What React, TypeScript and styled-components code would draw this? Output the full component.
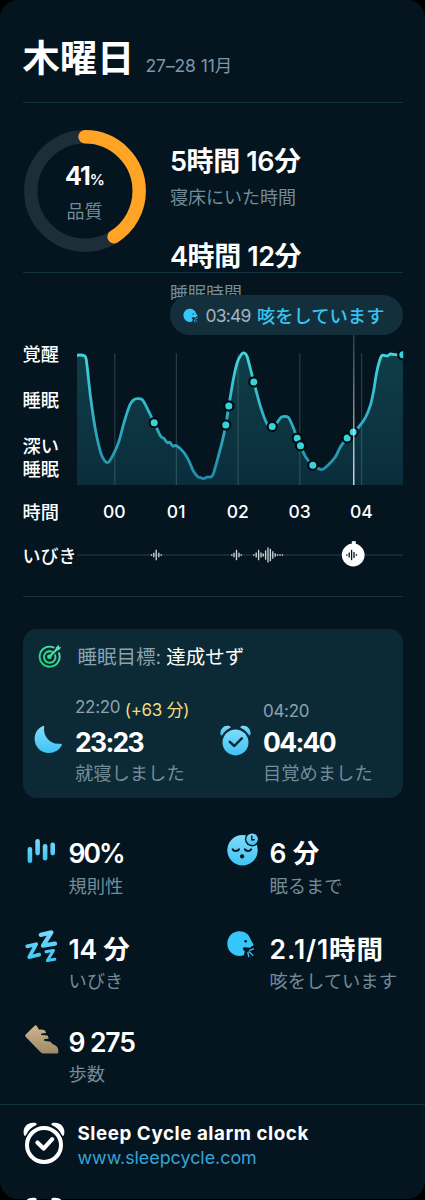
import styled, { createGlobalStyle } from 'styled-components';

const GlobalStyle = createGlobalStyle`
  * {
    box-sizing: border-box;
  }
  body {
    margin: 0;
    background: #000000;
    font-family: Inter, 'Noto Sans CJK JP', sans-serif;
    color: #ffffff;
  }
`;

const Page = styled.main`
  width: 425px;
  height: 1200px;
  overflow: hidden;
`;

const Card = styled.article`
  height: 1199px;
  border-radius: 18px;
  background: #04151f;
`;

const Body = styled.div`
  padding: 0 22.5px;
`;

const Divider = styled.hr`
  height: 1px;
  margin: 0;
  border: none;
  background: #123242;
`;

const Header = styled.header`
  display: flex;
  align-items: flex-start;
  height: 101.5px;
  padding-top: 37px;
`;

const Day = styled.h1`
  margin: 0;
  width: 123px;
  font-size: 37.3px;
  line-height: 44px;
  font-weight: 700;
`;

const DateText = styled.span`
  margin-top: 19px;
  font-size: 17.5px;
  line-height: 20px;
  letter-spacing: -0.1px;
  color: #7e96a9;
`;

const Summary = styled.section`
  display: flex;
  align-items: flex-start;
  height: 169px;
`;

const Quality = styled.div`
  display: grid;
  place-items: center;
  width: 124px;
  height: 124px;
  margin-top: 26.5px;

  > * {
    grid-area: 1 / 1;
  }
`;

const QualityText = styled.div`
  display: flex;
  flex-direction: column;
  align-items: center;
  gap: 6px;
  padding-top: 3px;
`;

const Percent = styled.div`
  font-size: 25px;
  line-height: 28px;
  font-weight: 700;
  letter-spacing: -1px;

  small {
    font-size: 15px;
    font-weight: 600;
  }
`;

const Label = styled.div<{ size?: number }>`
  font-size: ${(props) => props.size ?? 18}px;
  line-height: 24px;
  color: #728c9a;
  white-space: nowrap;
`;

const Value = styled.div<{ spacing?: number }>`
  font-size: 26.5px;
  line-height: 32px;
  font-weight: 600;
  letter-spacing: ${(props) => props.spacing ?? 0}px;
  white-space: nowrap;
`;

const Durations = styled.div`
  display: flex;
  flex-direction: column;
  gap: 31px;
  margin: 43px 0 0 23.5px;
`;

const Duration = styled.div`
  ${Value} {
    margin-bottom: 8.5px;
    font-size: 27px;
  }
`;

const Bubble = styled.div`
  position: relative;
  display: flex;
  align-items: center;
  width: 233px;
  height: 40.5px;
  margin: 22px 0 0 auto;
  padding: 1px 0 0 13px;
  border-radius: 21px;
  background: #132f3c;
  white-space: nowrap;

  svg {
    margin-right: 8px;
  }
`;

const BubbleTime = styled.span`
  width: 51.5px;
  font-size: 17.5px;
  letter-spacing: -0.8px;
  color: #a3b5c1;
`;

const BubbleText = styled.span`
  font-size: 18.3px;
  font-weight: 500;
  color: #36c6f4;
`;

const ChartRow = styled.div`
  display: grid;
  grid-template-columns: 54px 1fr;

  svg {
    display: block;
    overflow: visible;
  }
`;

const Stages = styled.div`
  display: flex;
  flex-direction: column;
  gap: 23px;
  padding-top: 7.5px;
  font-size: 18.2px;
  line-height: 23px;
  font-weight: 500;
`;

const Hours = styled.div`
  display: flex;
  margin-top: 14.5px;
  font-size: 17.5px;
  line-height: 24px;
  font-weight: 500;
`;

const HoursLabel = styled.span`
  width: 61px;
  font-size: 18.2px;
`;

const Hour = styled.span`
  width: 61.75px;
  text-align: center;
`;

const SnoreRow = styled(ChartRow)`
  height: 26px;
  margin: 18.5px 0 28px;
  align-items: center;
  font-size: 18px;
  line-height: 24px;
  font-weight: 500;
  white-space: nowrap;

  span {
    padding-top: 2.5px;
  }
`;

const Goal = styled.section`
  height: 169px;
  margin-top: 31.5px;
  padding: 15px 12px 0 11.5px;
  border-radius: 14px;
  background: #0c2936;
`;

const GoalTitle = styled.div`
  display: flex;
  align-items: center;
  height: 24px;
  font-size: 19.5px;
  color: #8ba2af;
  white-space: nowrap;

  svg {
    margin: 0 15.5px 0 4px;
  }

  b {
    margin-left: 5px;
    font-weight: 400;
    color: #ffffff;
  }
`;

const GoalTimes = styled.div`
  display: grid;
  grid-template-columns: 186px 1fr;
  margin-top: 29px;
`;

const GoalTime = styled.div<{ iconWidth: number }>`
  display: grid;
  grid-template-columns: ${(props) => props.iconWidth}px 1fr;

  > svg {
    margin-top: 28px;
  }
`;

const Planned = styled.div<{ top?: number }>`
  display: flex;
  height: 29px;
  padding-top: ${(props) => props.top ?? 0}px;
  font-size: 17px;
  line-height: 20px;
  letter-spacing: -0.3px;
  color: #8ba2af;
  white-space: nowrap;
`;

const Late = styled.span`
  margin: 3px 0 0 4.5px;
  font-size: 17px;
  color: #f1dc7d;
`;

const ClockTime = styled(Value)`
  font-weight: 700;
  line-height: 32px;
  margin-bottom: 3.5px;
`;

const Stats = styled.section`
  display: grid;
  grid-template-columns: 201px 1fr;
  grid-template-rows: 95.5px 93px 1fr;
  height: 306px;
  padding-top: 41.5px;
`;

const Stat = styled.div<{ iconTop: number }>`
  display: grid;
  grid-template-columns: 46px 1fr;

  > svg {
    margin-top: ${(props) => props.iconTop}px;
  }

  ${Value} {
    line-height: 29px;
    margin-bottom: 5.5px;
  }
`;

const Footer = styled.footer`
  display: flex;
  align-items: flex-start;
  height: 75px;
  padding: 17px 22.5px 0;

  svg {
    margin-right: 13px;
  }
`;

const AppName = styled.div`
  margin-top: -1px;
  font-size: 18.8px;
  line-height: 25px;
  letter-spacing: 0.55px;
  font-weight: 700;
  white-space: nowrap;
`;

const Link = styled.a`
  display: block;
  font-size: 17.85px;
  line-height: 24px;
  color: #35a4d8;
`;

// Chart coordinates: x from the left edge of the plot, y from the bubble's lower edge.
const curve: [number, number][] = [
  [0, 20.3], [3, 20], [6.2, 20.5], [9.2, 24.3], [13.5, 61.7], [18.5, 95], [24.5, 120],
  [30.2, 127.7], [35.2, 121.7], [41.8, 106.7], [46.8, 88.3], [52.8, 70], [56.8, 64.8],
  [60.2, 63.6], [65.2, 64.6], [70.2, 73.3], [77.2, 87.7], [83.5, 101], [86.8, 103.3],
  [90.2, 107.7], [92.8, 107.3], [95.8, 111], [99.5, 110.7], [106.8, 117.3],
  [111.8, 125.7], [116.2, 135.7], [120.8, 141.7], [123.5, 142.5], [126.8, 143.7],
  [130.2, 142], [133.5, 142], [136.2, 139.3], [140.8, 123.3], [145.2, 106.7],
  [148.8, 90], [151.8, 71], [156.2, 45], [160.2, 27.7], [164.5, 19.3], [167.2, 18],
  [170.2, 21.7], [176.8, 47], [183.5, 71.7], [190.2, 89.3], [195.2, 91.7],
  [200.2, 87.5], [204.5, 81.9], [211.2, 82.2], [216.2, 92.3], [220.2, 103.3],
  [223.5, 110.7], [228.5, 121.7], [235.8, 130.3], [240.8, 133.4], [245.2, 134.5],
  [250.2, 131], [258.5, 121.7], [263.5, 111.7], [270.2, 103], [276.2, 97],
  [281.8, 92], [288.5, 82.3], [293.5, 70], [296.8, 55], [299.5, 38.3], [302.8, 25],
  [305.2, 20.2], [310.2, 21], [313.5, 19], [318.5, 19.7], [326, 19.7],
];

const events: [number, number][] = [
  [77.2, 87.7], [148.8, 90], [151.8, 71], [176.8, 47], [195.2, 91.5], [220.2, 103.3],
  [223.5, 110.7], [235.8, 130.3], [270.2, 103], [276.2, 97], [325.8, 19.8],
];

const gridLines = [37.8, 99.4, 161.1, 222.8, 284.6];

// [x, half height] of each bar on the snore track
const snores: [number, number][] = [
  [74.5, 0.8], [76.8, 2.2], [79.2, 5.2], [81.8, 2.2], [84.2, 0.8],
  [154.8, 0.8], [157, 2.2], [159.5, 5.2], [162, 2.2], [164.2, 0.8],
  [176.8, 0.8], [179.2, 2.4], [181.6, 5.2], [184, 2.4], [186.2, 1.5],
  [188.6, 4.6], [191, 7.4], [193.4, 6.2], [195.8, 3.8], [198.2, 1.8], [200.6, 0.7],
  [203, 0.7], [205.4, 0.7],
];

const selectedSnore: [number, number][] = [
  [269.9, 0.8], [272.2, 2.4], [274.6, 5.2], [277, 3], [279.4, 0.8],
];

function smooth(points: [number, number][]) {
  let d = `M${points[0][0]} ${points[0][1]}`;
  for (let i = 0; i < points.length - 1; i++) {
    const a = points[Math.max(i - 1, 0)];
    const b = points[i];
    const c = points[i + 1];
    const e = points[Math.min(i + 2, points.length - 1)];
    d += ` C${b[0] + (c[0] - a[0]) / 8} ${b[1] + (c[1] - a[1]) / 8} ${c[0] - (e[0] - b[0]) / 8} ${c[1] - (e[1] - b[1]) / 8} ${c[0]} ${c[1]}`;
  }
  return d;
}

function SleepChart() {
  const line = smooth(curve);

  return (
    <svg width="326" height="150" viewBox="0 0 326 150">
      <defs>
        <clipPath id="plot">
          <rect x="0" y="0" width="326.2" height="150" />
        </clipPath>
        <linearGradient id="area" x1="0" y1="18" x2="0" y2="150" gradientUnits="userSpaceOnUse">
          <stop offset="0" stopColor="#0f3e47" />
          <stop offset="1" stopColor="#0a2d3c" />
        </linearGradient>
        <linearGradient id="line" x1="0" y1="18" x2="0" y2="150" gradientUnits="userSpaceOnUse">
          <stop offset="0" stopColor="#40d6e0" />
          <stop offset="1" stopColor="#2188a6" />
        </linearGradient>
        <linearGradient id="pin" x1="0" y1="0" x2="0" y2="150" gradientUnits="userSpaceOnUse">
          <stop offset="0" stopColor="#ffffff" stopOpacity="0.2" />
          <stop offset="0.7" stopColor="#ffffff" stopOpacity="0.8" />
          <stop offset="1" stopColor="#ffffff" />
        </linearGradient>
      </defs>
      <path d={`${line} V150 H0 Z`} fill="url(#area)" />
      {gridLines.map((x) => (
        <path key={x} d={`M${x} 18.5V150`} stroke="#7d98a3" strokeOpacity="0.3" strokeWidth="1.2" />
      ))}
      <g clipPath="url(#plot)">
        <path d={line} fill="none" stroke="url(#line)" strokeWidth="2.8" strokeLinejoin="round" />
        {events.map(([x, y]) => (
          <circle key={x} cx={x} cy={y} r="4.6" fill="#35d3de" stroke="#020b10" strokeWidth="2.2" />
        ))}
      </g>
      <path d="M276.8 0V150" stroke="url(#pin)" strokeWidth="1.2" />
    </svg>
  );
}

function SnoreTrack() {
  return (
    <svg width="326" height="26" viewBox="0 0 326 26">
      <path d="M0 13H326" stroke="#1a323c" strokeWidth="1.3" />
      {snores.map(([x, h]) => (
        <path key={x} d={`M${x} ${13 - h}V${13 + h}`} stroke="#d3dade" strokeWidth="1.3" />
      ))}
      <path d="M274.8 -0.8H278.8V3H274.8Z" fill="#ffffff" />
      <circle cx="276.2" cy="13" r="11.4" fill="#ffffff" />
      {selectedSnore.map(([x, h]) => (
        <path key={x} d={`M${x} ${13 - h}V${13 + h}`} stroke="#04151f" strokeWidth="1.3" />
      ))}
    </svg>
  );
}

function QualityRing() {
  return (
    <svg width="124" height="124" viewBox="0 0 124 124">
      <circle cx="62" cy="62" r="54.2" fill="none" stroke="#1d2d3a" strokeWidth="13.4" />
      <circle
        cx="62"
        cy="62"
        r="54.2"
        fill="none"
        stroke="#ffa425"
        strokeWidth="13.4"
        strokeLinecap="round"
        pathLength="100"
        strokeDasharray="41 100"
        transform="rotate(-90 62 62)"
      />
    </svg>
  );
}

function BlueGradient({ id }: { id: string }) {
  return (
    <linearGradient id={id} x1="0" y1="0" x2="0" y2="1">
      <stop offset="0" stopColor="#7fdcfb" />
      <stop offset="1" stopColor="#3fc3f5" />
    </linearGradient>
  );
}

function CoughIcon({ size, bg, inset = 0 }: { size: number; bg: string; inset?: number }) {
  return (
    <svg width={size + inset} height={size} viewBox={`${-inset} 0 ${28 + inset} 28`}>
      <path
        d="M13 1.2C18.4 1.2 22.8 4.4 24 9.2L26.8 14.2C27.3 15.2 26.8 16 25.8 16H25.2C24.8 17 23.8 17.8 22.6 17.7L18.4 17.2C17 17 16 17.8 16.4 18.9L18.2 21.6L17.4 25.2C16 25.8 14.6 26 13 26C6 26 .8 20.6 .8 13.6C.8 6.6 6 1.2 13 1.2Z"
        fill="#36c6fa"
      />
      <circle cx="19.2" cy="11.2" r="1.3" fill={bg} />
      <path d="M23.2 20.3L27 18.9M22.6 21.8L26.4 25.4M21.4 22.6L22.2 26.6" stroke="#36c6fa" strokeWidth="1.3" strokeLinecap="round" />
    </svg>
  );
}

function TargetIcon() {
  return (
    <svg width="24" height="24" viewBox="0 0 24 24" fill="none" strokeLinecap="round" strokeLinejoin="round">
      <defs>
        <linearGradient id="target" x1="24" y1="0" x2="0" y2="24" gradientUnits="userSpaceOnUse">
          <stop offset="0" stopColor="#62ebbd" />
          <stop offset="1" stopColor="#16cf72" />
        </linearGradient>
      </defs>
      <g stroke="url(#target)" strokeWidth="1.9">
        <path d="M15.6 3.5A10 10 0 1 0 21 9.2" />
        <path d="M13.8 7.6A5.8 5.8 0 1 0 17.2 11.2" />
        <path d="M11.2 13L19.4 4.8" strokeWidth="2.2" />
      </g>
      <circle cx="11.4" cy="12.8" r="2.3" fill="url(#target)" />
      <path d="M17.6 6.5L17.8 3.6L20.6 .9L21.2 3L23.3 3.6L20.6 6.3Z" fill="url(#target)" />
    </svg>
  );
}

function MoonIcon() {
  return (
    <svg width="29" height="29" viewBox="0 0 29 29">
      <defs>
        <BlueGradient id="moon" />
      </defs>
      <path
        d="M8.8 1.1C9.9 .5 10.6 1.2 10.2 2.3C8.7 11 16.3 20.2 26.2 18.7C27.6 18.5 28.3 19.2 27.6 20.5C25 25.2 20.4 28 15 28C7 28 .6 21.8 .6 14C.6 8.2 3.8 3.3 8.8 1.1Z"
        fill="url(#moon)"
      />
    </svg>
  );
}

function AlarmIcon() {
  return (
    <svg width="31" height="31" viewBox="0 0 31 31">
      <defs>
        <BlueGradient id="alarm" />
      </defs>
      <path d="M.6 9.7C-.6 4.4 4.2-.6 9.8 1.2C10.9 1.6 10.9 2.6 10 3.1C6.7 4.6 4.4 6.6 2.6 9.6C2 10.7 .9 10.8 .6 9.7Z" fill="url(#alarm)" />
      <path d="M30.4 9.7C31.6 4.4 26.8-.6 21.2 1.2C20.1 1.6 20.1 2.6 21 3.1C24.3 4.6 26.6 6.6 28.4 9.6C29 10.7 30.1 10.8 30.4 9.7Z" fill="url(#alarm)" />
      <circle cx="15.5" cy="17.4" r="13" fill="url(#alarm)" />
      <path d="M9.8 16.9L14.3 21L21.8 13.3" fill="none" stroke="#0c2936" strokeWidth="2.5" strokeLinecap="round" strokeLinejoin="round" />
    </svg>
  );
}

function RegularityIcon() {
  return (
    <svg width="32" height="30" viewBox="0 0 32 30">
      <defs>
        <linearGradient id="bars" x1="0" y1="2" x2="0" y2="28" gradientUnits="userSpaceOnUse">
          <stop offset="0" stopColor="#85dcfa" />
          <stop offset="1" stopColor="#36c2f5" />
        </linearGradient>
      </defs>
      <g fill="url(#bars)">
        <rect x="4.6" y="12" width="4.6" height="16" rx="2.3" />
        <rect x="12.3" y="4" width="4.6" height="16.4" rx="2.3" />
        <rect x="19.8" y="9" width="4.6" height="16.6" rx="2.3" />
        <rect x="27.4" y="7.4" width="4.6" height="13" rx="2.3" />
      </g>
    </svg>
  );
}

function SnoreIcon() {
  return (
    <svg width="36" height="36" viewBox="0 0 36 36" fill="none" strokeLinecap="round" strokeLinejoin="round">
      <defs>
        <linearGradient id="zzz" x1="0" y1="0" x2="0" y2="34" gradientUnits="userSpaceOnUse">
          <stop offset="0" stopColor="#7ddcfb" />
          <stop offset="1" stopColor="#3cc3f6" />
        </linearGradient>
      </defs>
      <g stroke="url(#zzz)">
        <path d="M17.8 5.8L28.4 3.4L20 16.6L32 14.6" strokeWidth="4.3" />
        <path d="M4.2 17.4L13.2 15.2L6.2 28.2L16.2 25.6" strokeWidth="3.7" />
        <path d="M23 22.8L30.4 21.4L24.4 31.6L31.8 30.2" strokeWidth="3" />
      </g>
    </svg>
  );
}

function SleepyFaceIcon() {
  return (
    <svg width="34" height="33" viewBox="-0.5 0 34 33">
      <defs>
        <BlueGradient id="face" />
      </defs>
      <circle cx="18" cy="17.2" r="15.2" fill="url(#face)" />
      <circle cx="27.6" cy="6.2" r="7.2" fill="#04151f" />
      <circle cx="27.6" cy="6.2" r="5.8" fill="url(#face)" />
      <g fill="none" stroke="#04151f" strokeLinecap="round">
        <path d="M27.3 2.9V6.8H29.7" strokeWidth="1.4" />
        <path d="M8.2 16.4C9.4 18.4 13.2 18.4 14.5 16.4M20.4 16.4C21.7 18.4 25.4 18.4 26.6 16.4" strokeWidth="2" />
      </g>
      <circle cx="17.6" cy="23.4" r="2.1" fill="#04151f" />
    </svg>
  );
}

function ShoeIcon() {
  return (
    <svg width="36" height="31" viewBox="0 0 36 31">
      <defs>
        <linearGradient id="shoe" x1="0" y1="0" x2="0" y2="1">
          <stop offset="0" stopColor="#cdb690" />
          <stop offset="1" stopColor="#a08a66" />
        </linearGradient>
      </defs>
      <path
        d="M2.9 10.2L11.6 1.7C12.4.9 13.2 1 13.8 1.9L16.2 5.8C18.2 5.4 20.2 5.6 22 6.4L23.2 9L18.6 9.6C17.9 9.8 17.9 11 18.7 11.1L24.6 11.6L25.8 14.4L21.4 15.2C20.7 15.4 20.7 16.7 21.4 16.8L27.6 17.8C28.4 19 29.4 20 30.6 20.6C33.4 21.6 35.2 23.6 35.3 26.4V28.2C35.3 29 34.8 29.4 34 29.4H20.6C19.4 29.4 18.4 29 17.6 28.2L3 13.2C2 12.2 2 11.2 2.9 10.2Z"
        fill="url(#shoe)"
      />
    </svg>
  );
}

function LogoIcon() {
  return (
    <svg width="42" height="44" viewBox="0 0 42 44">
      <path d="M1.1 13.2C-1.3 5.2 5.4-1 12.6 1.1C14 1.6 14 2.7 12.8 3.3C8.4 5.2 5.4 8.2 3.4 12.5C2.8 13.8 1.6 14.3 1.1 13.2Z" fill="#ffffff" />
      <path d="M40.9 13.2C43.3 5.2 36.6-1 29.4 1.1C28 1.6 28 2.7 29.2 3.3C33.6 5.2 36.6 8.2 38.6 12.5C39.2 13.8 40.4 14.3 40.9 13.2Z" fill="#ffffff" />
      <g fill="none" stroke="#ffffff">
        <circle cx="21" cy="23" r="17" strokeWidth="4" />
        <path d="M14.4 20.6L20.6 26.6L29.2 17.2" strokeWidth="4.2" strokeLinecap="round" strokeLinejoin="round" />
      </g>
    </svg>
  );
}

function AppFooter() {
  return (
    <Footer>
      <LogoIcon />
      <div>
        <AppName>Sleep Cycle alarm clock</AppName>
        <Link>www.sleepcycle.com</Link>
      </div>
    </Footer>
  );
}

const stats = [
  { icon: <RegularityIcon />, iconTop: -4.5, value: '90%', spacing: -2, label: '規則性' },
  { icon: <SleepyFaceIcon />, iconTop: -6, value: '6 分', spacing: -0.2, label: '眠るまで' },
  { icon: <SnoreIcon />, iconTop: -6, value: '14 分', spacing: -0.3, label: 'いびき' },
  {
    icon: <CoughIcon size={28} bg="#04151f" inset={2.5} />,
    iconTop: -4.5,
    value: '2.1/1時間',
    spacing: 0.9,
    label: '咳をしています',
  },
  { icon: <ShoeIcon />, iconTop: -4, value: '9 275', spacing: -1.1, label: '歩数' },
];

function App() {
  return (
    <Page>
      <GlobalStyle />
      <Card>
        <Body>
          <Header>
            <Day>木曜日</Day>
            <DateText>27–28 11月</DateText>
          </Header>
          <Divider />
          <Summary>
            <Quality>
              <QualityRing />
              <QualityText>
                <Percent>
                  41<small>%</small>
                </Percent>
                <Label>品質</Label>
              </QualityText>
            </Quality>
            <Durations>
              <Duration>
                <Value spacing={-0.4}>5時間 16分</Value>
                <Label>寝床にいた時間</Label>
              </Duration>
              <Duration>
                <Value spacing={-0.4}>4時間 12分</Value>
                <Label>睡眠時間</Label>
              </Duration>
            </Durations>
          </Summary>
          <Divider />
          <Bubble>
            <CoughIcon size={15} bg="#132f3c" />
            <BubbleTime>03:49</BubbleTime>
            <BubbleText>咳をしています</BubbleText>
          </Bubble>
          <ChartRow>
            <Stages>
              <span>覚醒</span>
              <span>睡眠</span>
              <span>
                深い
                <br />
                睡眠
              </span>
            </Stages>
            <SleepChart />
          </ChartRow>
          <Hours>
            <HoursLabel>時間</HoursLabel>
            {['00', '01', '02', '03', '04'].map((hour) => (
              <Hour key={hour}>{hour}</Hour>
            ))}
          </Hours>
          <SnoreRow>
            <span>いびき</span>
            <SnoreTrack />
          </SnoreRow>
          <Divider />
          <Goal>
            <GoalTitle>
              <TargetIcon />
              睡眠目標:<b>達成せず</b>
            </GoalTitle>
            <GoalTimes>
              <GoalTime iconWidth={41}>
                <MoonIcon />
                <div>
                  <Planned>
                    22:20<Late>(+63 分)</Late>
                  </Planned>
                  <ClockTime spacing={-1.7}>23:23</ClockTime>
                  <Label size={18.3}>就寝しました</Label>
                </div>
              </GoalTime>
              <GoalTime iconWidth={43}>
                <AlarmIcon />
                <div>
                  <Planned top={4}>04:20</Planned>
                  <ClockTime spacing={-1.7}>04:40</ClockTime>
                  <Label size={18.3}>目覚めました</Label>
                </div>
              </GoalTime>
            </GoalTimes>
          </Goal>
          <Stats>
            {stats.map((stat) => (
              <Stat key={stat.label} iconTop={stat.iconTop}>
                {stat.icon}
                <div>
                  <Value spacing={stat.spacing}>{stat.value}</Value>
                  <Label size={18.3}>{stat.label}</Label>
                </div>
              </Stat>
            ))}
          </Stats>
        </Body>
        <Divider />
        <AppFooter />
        <AppFooter />
      </Card>
    </Page>
  );
}

export default App;
